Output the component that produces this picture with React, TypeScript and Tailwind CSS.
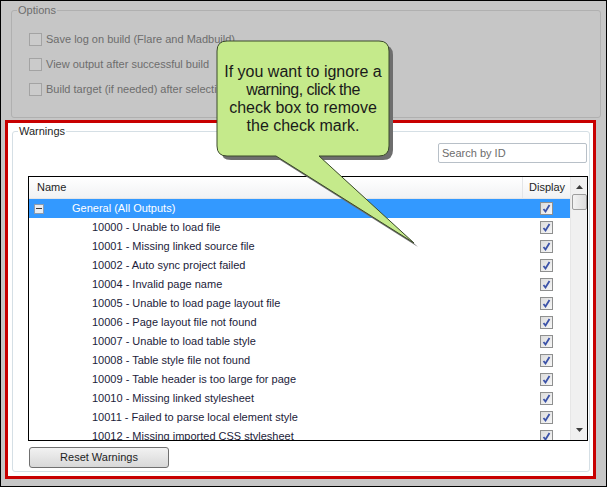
import React from 'react';

const warnings = [
  '10000 - Unable to load file',
  '10001 - Missing linked source file',
  '10002 - Auto sync project failed',
  '10004 - Invalid page name',
  '10005 - Unable to load page layout file',
  '10006 - Page layout file not found',
  '10007 - Unable to load table style',
  '10008 - Table style file not found',
  '10009 - Table header is too large for page',
  '10010 - Missing linked stylesheet',
  '10011 - Failed to parse local element style',
  '10012 - Missing imported CSS stylesheet',
];

const options = [
  'Save log on build (Flare and Madbuild)',
  'View output after successful build',
  'Build target (if needed) after selecting',
];

function CheckBox() {
  return (
    <span className="w-[13px] h-[13px] border border-[#8e8f8f] bg-gradient-to-br from-[#dcdcdc] to-[#f6f6f6] flex items-center justify-center">
      <svg width="9" height="9" viewBox="0 0 9 9">
        <path d="M1.5 5 L3.5 7.5 L7.5 1" fill="none" stroke="#3b52a8" strokeWidth="1.8" />
      </svg>
    </span>
  );
}

function App() {
  return (
    <div className="relative w-[607px] h-[487px] border border-black bg-[#c6c6c6] font-['Liberation_Sans',sans-serif] text-[11px] overflow-hidden">
      {/* Options */}
      <div className="relative mt-[9px] ml-[10px] mr-[5px] h-[108px] border border-[#b0b0b0] rounded-[3px]">
        <span className="absolute -top-[8px] left-[5px] px-[1px] bg-[#c6c6c6] text-[#6d6d6d] leading-[14px]">Options</span>
        <div className="flex flex-col gap-[12px] mt-[22px] ml-[17px]">
          {options.map((o) => (
            <div key={o} className="flex items-center h-[13px] gap-[4px]">
              <span className="w-[13px] h-[13px] border border-[#a3a3a3] bg-[#cbcbcb]" />
              <span className="text-[#6d6d6d] leading-[13px]">{o}</span>
            </div>
          ))}
        </div>
      </div>

      {/* Warnings (highlighted in red) */}
      <div className="mt-[2px] ml-[4px] w-[591px] h-[359px] border-[3px] border-[#c80000] bg-white flex flex-col">
        <div className="relative mt-[8px] ml-[4px] mr-[3px] mb-[4px] flex-1 border border-[#d5dfe5] rounded-[3px] flex flex-col">
          <span className="absolute -top-[8px] left-[5px] px-[1px] bg-white text-[#1e1e1e] leading-[14px]">Warnings</span>
          <div className="self-end mt-[11px] mr-[2px] w-[149px] h-[20px] border border-[#b8c0c8] rounded-[2px] flex items-center pl-[3px] text-[#6d6d6d]">
            Search by ID
          </div>
          <div className="mt-[13px] ml-[15px] mr-[1px] h-[265px] border border-black flex">
            <div className="flex-1 flex flex-col overflow-hidden">
              <div className="h-[22px] shrink-0 flex bg-gradient-to-b from-white to-[#f1f2f4] border-b border-[#e3e5e8] text-[#1e1e1e]">
                <div className="flex-1 pl-[8px] flex items-center">Name</div>
                <div className="w-[48px] border-l border-[#e3e5e8] pl-[6px] flex items-center">Display</div>
              </div>
              <div className="h-[19px] shrink-0 flex items-center bg-[#3399ff] text-white">
                <div className="flex-1 flex items-center">
                  <span className="ml-[5px] w-[10px] h-[10px] border border-[#8a9bb0] bg-[#e8ecf0] flex items-center justify-center">
                    <span className="w-[6px] h-[1px] bg-[#3a3a3a]" />
                  </span>
                  <span className="ml-[28px]">General (All Outputs)</span>
                </div>
                <div className="w-[48px] flex justify-center">
                  <CheckBox />
                </div>
              </div>
              {warnings.map((w) => (
                <div key={w} className="h-[19px] shrink-0 flex items-center text-[#1c1c3a]">
                  <div className="flex-1 pl-[63px]">{w}</div>
                  <div className="w-[48px] flex justify-center">
                    <CheckBox />
                  </div>
                </div>
              ))}
            </div>
            <div className="w-[17px] bg-[#f0f0f0] border-l border-[#e6e6e6] flex flex-col items-center">
              <svg className="mt-[8px]" width="7" height="4" viewBox="0 0 7 4">
                <path d="M0 4 L3.5 0 L7 4 Z" fill="#3c3c3c" />
              </svg>
              <div className="mt-[5px] w-[15px] h-[16px] rounded-[2px] border border-[#9d9d9d] bg-gradient-to-r from-[#f3f3f3] to-[#dcdcdc]" />
              <div className="flex-1" />
              <svg className="mb-[8px]" width="7" height="4" viewBox="0 0 7 4">
                <path d="M0 0 L7 0 L3.5 4 Z" fill="#3c3c3c" />
              </svg>
            </div>
          </div>
          <button className="mt-[6px] ml-[16px] w-[140px] h-[21px] rounded-[3px] border border-[#707070] bg-gradient-to-b from-[#f2f2f2] to-[#d8d8d8] text-[#1e1e1e] text-[11px] font-['Liberation_Sans',sans-serif]">
            Reset Warnings
          </button>
        </div>
      </div>

      {/* Callout */}
      <svg className="absolute inset-0 pointer-events-none" width="607" height="487" viewBox="0 0 607 487">
        <path
          d="M226,40 H378 Q388,40 388,50 V145 Q388,155 378,155 H318 L413,242 L275,155 H226 Q216,155 216,145 V50 Q216,40 226,40 Z"
          transform="translate(4 4)"
          fill="#6e6e6e"
        />
        <path
          d="M226,40 H378 Q388,40 388,50 V145 Q388,155 378,155 H318 L413,242 L275,155 H226 Q216,155 216,145 V50 Q216,40 226,40 Z"
          fill="#c5ea8b"
          stroke="#3a4a2a"
          strokeWidth="1"
        />
      </svg>
      <div className="absolute left-[216px] top-[40px] w-[172px] pt-[22px] text-center text-[16px] leading-[18px] text-[#1a1a1a] font-['Liberation_Sans',sans-serif] whitespace-nowrap">
        If you want to ignore a
        <br />
        <span className="tracking-[-0.5px]">warning, click the</span>
        <br />
        check box to remove
        <br />
        the check mark.
      </div>
    </div>
  );
}

export default App;
